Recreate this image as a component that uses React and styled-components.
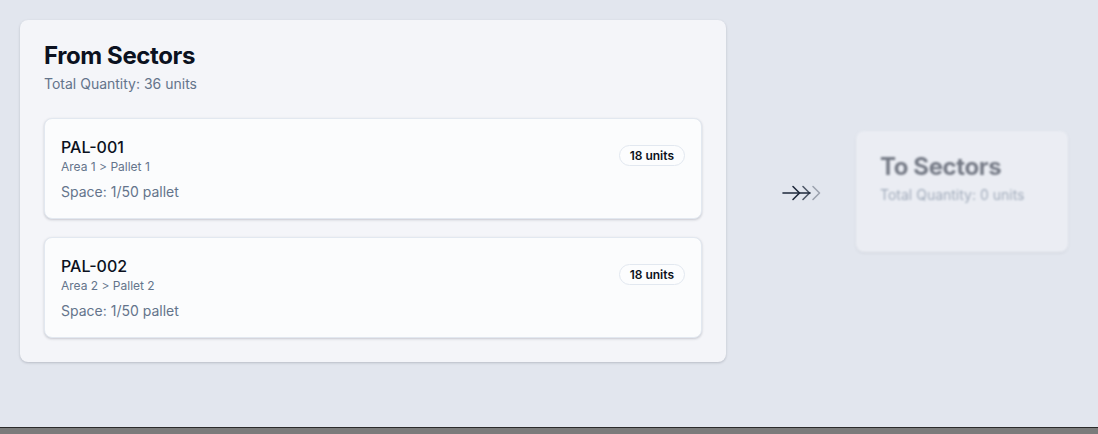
import React from "react";
import styled, { createGlobalStyle } from "styled-components";

const GlobalStyle = createGlobalStyle`
  * { box-sizing: border-box; }
  html, body { margin: 0; padding: 0; }
  body {
    font-family: Inter, "Noto Sans", sans-serif;
    background: #e2e6ee;
    color: #0f172a;
  }
`;

const Page = styled.div`
  height: 100vh;
  display: flex;
  flex-direction: column;
`;

const Main = styled.main`
  flex: 1;
  padding: 20px;
  display: flex;
  align-items: flex-start;
`;

const Row = styled.div`
  display: flex;
  align-items: center;
`;

const Card = styled.section`
  background: #f4f5f9;
  border-radius: 8px;
  box-shadow: 0 1px 3px rgba(15, 23, 42, 0.14), 0 1px 2px rgba(15, 23, 42, 0.06);
  width: ${(p) => p.$width}px;
  min-height: ${(p) => p.$minHeight || 0}px;
  opacity: ${(p) => (p.$muted ? 0.5 : 1)};
  filter: ${(p) => (p.$muted ? "blur(1px)" : "none")};
`;

const Header = styled.div`
  padding: 24px;
  display: flex;
  flex-direction: column;
  gap: 6px;
`;

const Title = styled.h2`
  margin: 0;
  font-size: 24px;
  line-height: 1;
  font-weight: 700;
  letter-spacing: -0.4px;
  color: #0b1120;
`;

const Subtitle = styled.p`
  margin: 0;
  font-size: 14px;
  line-height: 20px;
  color: #64748b;
`;

const Content = styled.div`
  padding: 0 24px 24px;
  display: flex;
  flex-direction: column;
  gap: 18px;
`;

const Item = styled.div`
  background: #fbfcfd;
  border: 1px solid #e2e8f0;
  border-radius: 8px;
  padding: 16px;
  box-shadow: 0 1px 3px rgba(15, 23, 42, 0.14), 0 1px 2px rgba(15, 23, 42, 0.06);
`;

const ItemTop = styled.div`
  display: flex;
  align-items: center;
  justify-content: space-between;
`;

const Name = styled.div`
  font-size: 16px;
  line-height: 24px;
  font-weight: 500;
  color: #0b1120;
`;

const Path = styled.div`
  font-size: 12px;
  line-height: 16px;
  color: #64748b;
`;

const Space = styled.div`
  margin-top: 7px;
  font-size: 14px;
  line-height: 20px;
  color: #64748b;
`;

const Badge = styled.span`
  display: inline-flex;
  align-items: center;
  height: 21px;
  padding: 0 10px;
  border: 1px solid #e2e8f0;
  border-radius: 999px;
  background: #fcfdfe;
  font-size: 12px;
  font-weight: 600;
  color: #0b1120;
`;

const ArrowBox = styled.div`
  margin: 4px 34px 0 56px;
  display: flex;
  align-items: center;
`;

const BottomBar = styled.div`
  height: 7px;
  background: #7b7b7b;
  border-top: 1px solid #2a2a2a;
`;

const pallets = [
  { id: "PAL-001", path: "Area 1 > Pallet 1", units: 18 },
  { id: "PAL-002", path: "Area 2 > Pallet 2", units: 18 },
];

function FlowArrow() {
  return (
    <svg width="40" height="16" viewBox="0 0 40 16" fill="none" strokeWidth="1.6" strokeLinecap="round" strokeLinejoin="round">
      <path d="M1 8 H28" stroke="#1e293b" />
      <path d="M11 1.5 L17.5 8 L11 14.5" stroke="#1e293b" />
      <path d="M21 1.5 L27.5 8 L21 14.5" stroke="#1e293b" opacity="0.75" />
      <path d="M31 1.5 L37.5 8 L31 14.5" stroke="#1e293b" opacity="0.35" />
    </svg>
  );
}

export default function App() {
  return (
    <>
      <GlobalStyle />
      <Page>
        <Main>
          <Row>
            <Card $width={706}>
              <Header>
                <Title>From Sectors</Title>
                <Subtitle>Total Quantity: 36 units</Subtitle>
              </Header>
              <Content>
                {pallets.map((p) => (
                  <Item key={p.id}>
                    <ItemTop>
                      <div>
                        <Name>{p.id}</Name>
                        <Path>{p.path}</Path>
                      </div>
                      <Badge>{p.units} units</Badge>
                    </ItemTop>
                    <Space>Space: 1/50 pallet</Space>
                  </Item>
                ))}
              </Content>
            </Card>

            <ArrowBox>
              <FlowArrow />
            </ArrowBox>

            <Card $width={212} $minHeight={121} $muted>
              <Header>
                <Title>To Sectors</Title>
                <Subtitle>Total Quantity: 0 units</Subtitle>
              </Header>
            </Card>
          </Row>
        </Main>
        <BottomBar />
      </Page>
    </>
  );
}
